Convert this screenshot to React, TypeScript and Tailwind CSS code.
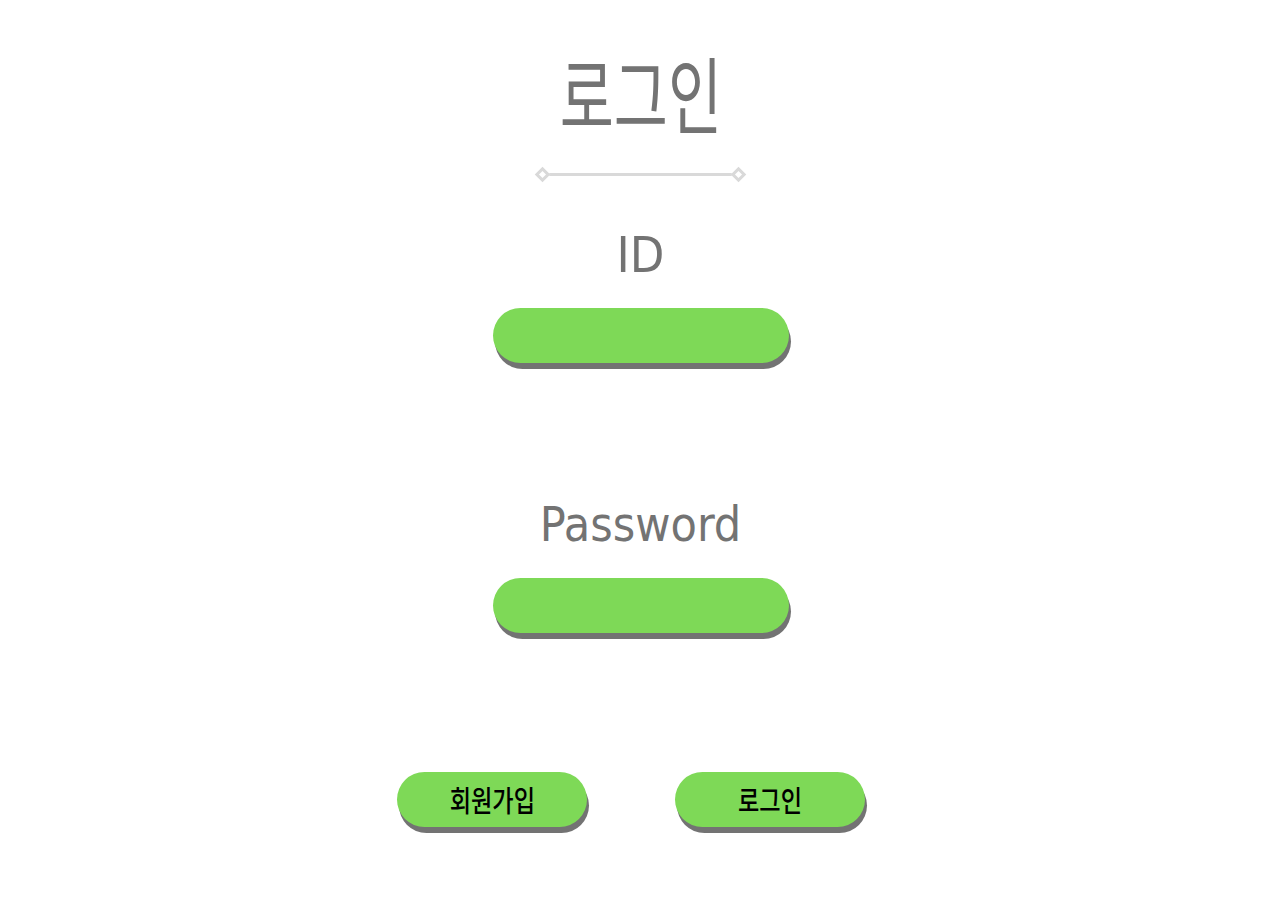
export default function App() {
  const font = {
    fontFamily: '"DejaVu Sans Condensed", "Noto Sans CJK KR", "Noto Sans", sans-serif',
  };
  const kr = { fontFamily: '"Noto Sans CJK KR", sans-serif' };

  return (
    <div className="min-h-[901px] w-full bg-white flex flex-col items-center" style={font}>
      <h1 className="mt-[42px] h-[100px] flex items-center text-[#737373]" style={kr}>
        <span className="inline-block text-[84px] leading-[100px] font-normal scale-x-[0.7]">로그인</span>
      </h1>

      <div className="mt-[27px] flex items-center w-[207px]">
        <span className="w-[11px] h-[11px] rotate-45 border-[3px] border-[#d9d9d9] bg-white shrink-0" />
        <span className="flex-1 h-[3px] bg-[#d9d9d9]" />
        <span className="w-[11px] h-[11px] rotate-45 border-[3px] border-[#d9d9d9] bg-white shrink-0" />
      </div>

      <label className="mt-[40px] text-[50px] leading-[70px] text-[#737373]">ID</label>
      <input
        type="text"
        className="mt-[18px] w-[296px] h-[55px] rounded-full bg-[#7ed957] shadow-[2px_6px_0_#737373] outline-none px-6"
      />

      <label className="mt-[126px] text-[48px] leading-[70px] text-[#737373]">Password</label>
      <input
        type="password"
        className="mt-[19px] w-[296px] h-[55px] rounded-full bg-[#7ed957] shadow-[2px_6px_0_#737373] outline-none px-6"
      />

      <div className="mt-[139px] mr-[19px] flex gap-[88px]">
        <button className="w-[190px] h-[55px] rounded-full bg-[#7ed957] shadow-[2px_6px_0_#737373] text-black" style={kr}>
          <span className="inline-block text-[29px] font-medium scale-x-[0.8]">회원가입</span>
        </button>
        <button className="w-[190px] h-[55px] rounded-full bg-[#7ed957] shadow-[2px_6px_0_#737373] text-black" style={kr}>
          <span className="inline-block text-[29px] font-medium scale-x-[0.8]">로그인</span>
        </button>
      </div>
    </div>
  );
}
